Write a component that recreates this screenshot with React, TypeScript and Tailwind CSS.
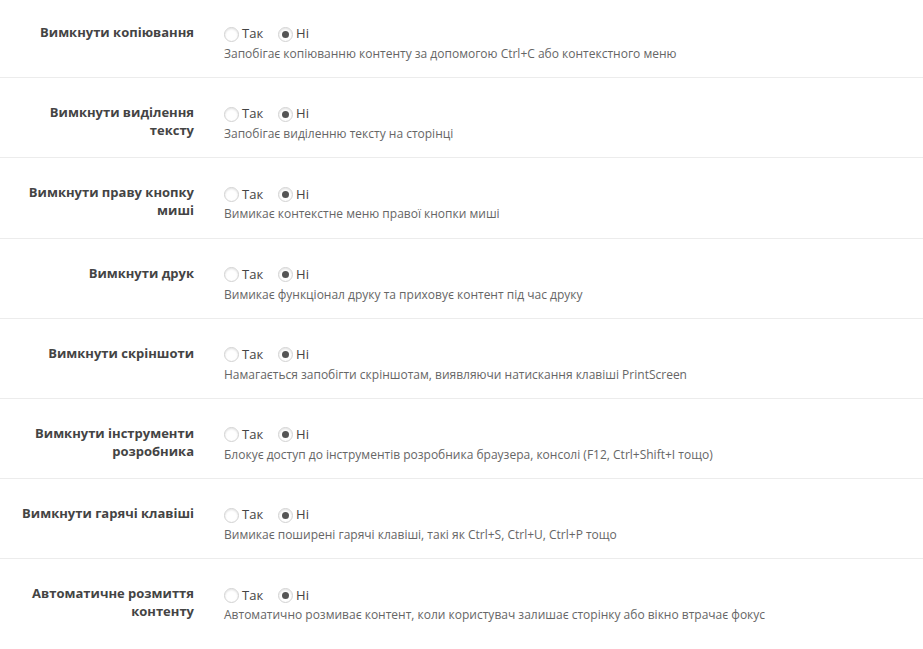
import React from "react";

type Setting = {
  label: string;
  hint: string;
  value: boolean;
};

const settings: Setting[] = [
  { label: "Вимкнути копіювання", hint: "Запобігає копіюванню контенту за допомогою Ctrl+C або контекстного меню", value: false },
  { label: "Вимкнути виділення тексту", hint: "Запобігає виділенню тексту на сторінці", value: false },
  { label: "Вимкнути праву кнопку миші", hint: "Вимикає контекстне меню правої кнопки миші", value: false },
  { label: "Вимкнути друк", hint: "Вимикає функціонал друку та приховує контент під час друку", value: false },
  { label: "Вимкнути скріншоти", hint: "Намагається запобігти скріншотам, виявляючи натискання клавіші PrintScreen", value: false },
  { label: "Вимкнути інструменти розробника", hint: "Блокує доступ до інструментів розробника браузера, консолі (F12, Ctrl+Shift+I тощо)", value: false },
  { label: "Вимкнути гарячі клавіші", hint: "Вимикає поширені гарячі клавіші, такі як Ctrl+S, Ctrl+U, Ctrl+P тощо", value: false },
  { label: "Автоматичне розмиття контенту", hint: "Автоматично розмиває контент, коли користувач залишає сторінку або вікно втрачає фокус", value: false },
];

const Radio: React.FC<{ checked: boolean; text: string }> = ({ checked, text }) => (
  <label className="flex items-center cursor-pointer">
    <span className="flex items-center justify-center w-[15px] h-[15px] rounded-full border border-[#d2d2d2] bg-white shadow-[inset_0_1px_2px_rgba(0,0,0,0.12)]">
      {checked && <span className="block w-[7px] h-[7px] rounded-full bg-[#555]" />}
    </span>
    <span className="ml-[3px] text-[13px] text-[#444]">{text}</span>
  </label>
);

const App: React.FC = () => {
  return (
    <div className="w-[923px] h-[649px] overflow-hidden bg-white" style={{ fontFamily: '"Open Sans", "Noto Sans", sans-serif' }}>
      <div className="-mt-[2px]">
        {settings.map((s, i) => (
          <div key={i} className="flex h-[80.2px] pt-[25px] border-b border-[#ececec] last:border-b-0">
            <div className="ml-[14px] w-[180px] text-right text-[13px] leading-[18px] font-bold text-[#444]">{s.label}</div>
            <div className="ml-[30px] pt-[1px]">
              <div className="flex items-center gap-[15px] h-[20px]">
                <Radio checked={s.value} text="Так" />
                <Radio checked={!s.value} text="Ні" />
              </div>
              <p className="mt-[1px] text-[12px] leading-[18px] text-[#666]">{s.hint}</p>
            </div>
          </div>
        ))}
      </div>
    </div>
  );
};

export default App;
